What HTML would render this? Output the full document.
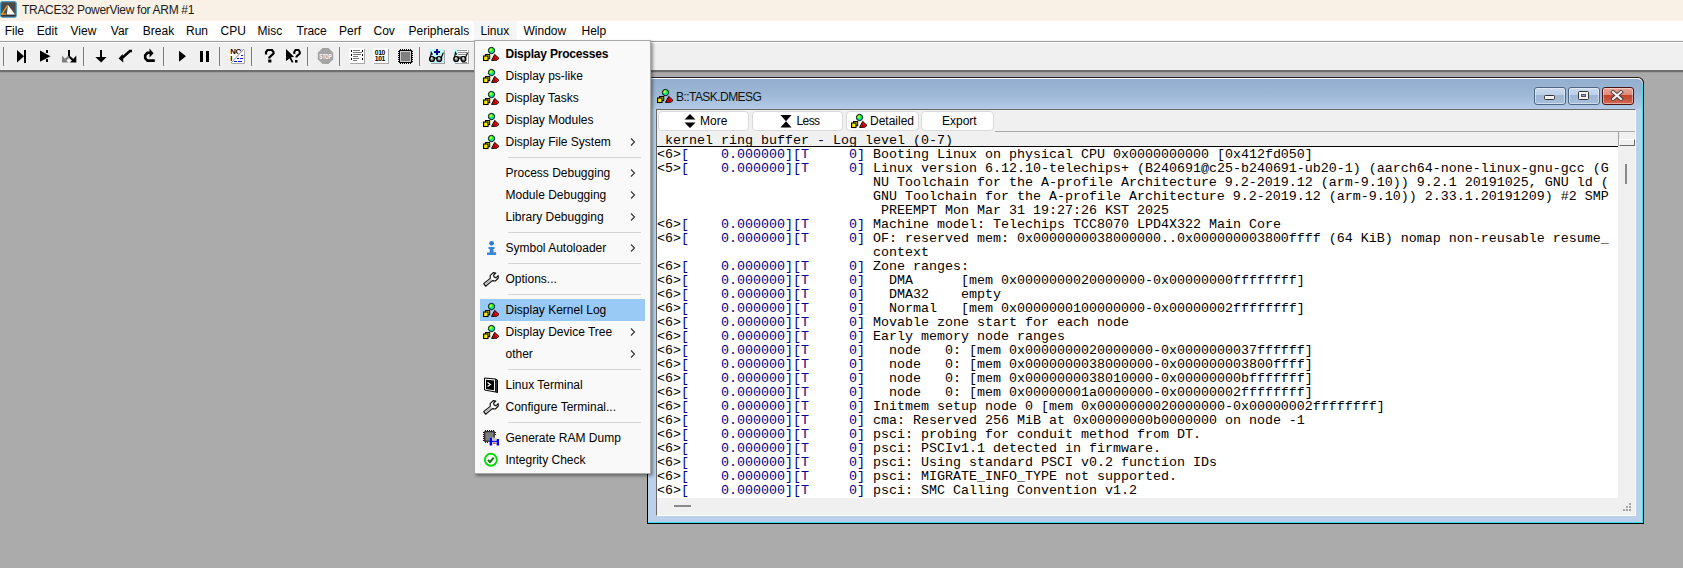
<!DOCTYPE html><html><head><meta charset="utf-8"><style>
*{margin:0;padding:0;box-sizing:border-box}
html,body{width:1683px;height:568px;overflow:hidden;background:#ababab;position:relative;font-family:"Liberation Sans",sans-serif;font-size:12px;color:#000}
.abs{position:absolute}
#title{position:absolute;left:0;top:0;width:1683px;height:21px;background:#f9f1e5}
#title .t{position:absolute;left:22px;top:3px;font-size:12px;line-height:14px;color:#1a1a1a;letter-spacing:-0.3px}
#menubar{position:absolute;left:0;top:21px;width:1683px;height:20px;background:#fff;border-bottom:1px solid #f4f4f4}
.mb{position:absolute;top:24px;line-height:14px;color:#000}
#mbhl{position:absolute;left:474px;top:21px;width:43px;height:19px;background:#f6f6f6}
#tbline{position:absolute;left:0;top:41px;width:1683px;height:1px;background:#a0a0a0}
#toolbar{position:absolute;left:0;top:42px;width:1683px;height:30px;background:#f0f0f0;border-top:1px solid #fff;border-bottom:1px solid #fff}
#tbbot{position:absolute;left:0;top:70px;width:1683px;height:2px;background:#6e6e6e}
#tbbot2{position:absolute;left:0;top:72px;width:1683px;height:1px;background:#9c9c9c}
.tsep{position:absolute;top:47px;width:1px;height:19px;background:#7a7a7a}
/* window */
#win{position:absolute;left:647px;top:77px;width:997px;height:447px;background:#b9d1ea;border-left:1px solid #000;border-top:1px solid #222;border-right:1px solid #000;border-bottom:1px solid #000;border-radius:6px 6px 0 0}
#wincy{position:absolute;right:0;top:6px;width:1px;bottom:0;background:#3de0f0}
#wincy2{position:absolute;left:0;bottom:0;height:1px;right:0;background:#3de0f0}
#wintitle{position:absolute;left:0;top:0;width:994px;height:31px;border-top:1px solid #fff;border-radius:5px 5px 0 0;background:linear-gradient(#93afcf,#9db7d6 50%,#b3cbe5)}
#wtxt{position:absolute;left:28px;top:11px;font-size:12px;line-height:14px;color:#111;letter-spacing:-0.55px}
#client{position:absolute;left:8px;top:31px;width:980px;height:407px;background:#f0f0f0;border-left:1px solid #6a6a6a;border-top:1px solid #6a6a6a;border-right:1px solid #fff;border-bottom:1px solid #fff}
.btn{position:absolute;top:1px;height:20px;background:#fff;border:1px solid #d9d9d9;border-radius:4px;line-height:18px;font-size:12px;color:#000}
#hdrtop{position:absolute;left:338px;top:21px;width:640px;height:1px;background:#a8a8a8}
#hdr{position:absolute;left:0;top:22px;width:961px;height:15px;background:#f0f0f0;border-bottom:1px solid #000;font-family:"Liberation Mono",monospace;font-size:13.3333px;line-height:14px;white-space:pre;overflow:hidden}
#hdr span{position:absolute;left:0;top:2px}
#log{position:absolute;left:0;top:37px;width:961px;height:351px;background:#fff;font-family:"Liberation Mono",monospace;font-size:13.3333px;line-height:14px;white-space:pre;overflow:hidden;padding-top:1px}
#log b{font-weight:normal;color:#00008a}
#vscroll{position:absolute;left:961px;top:22px;width:17px;height:366px;background:#f0f0f0}
#hscroll{position:absolute;left:0;top:388px;width:978px;height:17px;background:#f0f0f0}
.wbtn{position:absolute;top:8px;width:32px;height:18px;border:1px solid #4f6584;border-radius:3px;background:linear-gradient(#c9daee 0%,#bcd0e8 45%,#9fb6d4 46%,#a9c0dc 100%);box-shadow:inset 0 0 0 1px rgba(255,255,255,0.45)}
.wbtn.close{border-color:#4a1414;background:linear-gradient(#e9a496 0%,#de8a78 45%,#c2422a 46%,#cf6b55 100%)}
/* menu */
#menu{position:absolute;left:474px;top:40px;width:177px;height:434px;background:#f9f9f9;border:1px solid #a8a8a8;box-shadow:2px 2px 3px rgba(0,0,0,0.4)}
.mi{position:absolute;left:5px;width:165px;height:22px}
.mi.hl{background:#99c9f5}
.mic{position:absolute;left:3px;top:3px}
.mt{position:absolute;left:25.5px;top:4px;line-height:14px;white-space:nowrap;color:#000}
.bold .mt{font-weight:bold;letter-spacing:-0.2px}
.mar{position:absolute;left:149.5px;top:7px}
.msep{position:absolute;left:33px;width:133px;height:1px;background:#d4d4d4}
</style></head><body>

<svg width="0" height="0" style="position:absolute">
<defs>
<radialGradient id="gball" cx="0.35" cy="0.35" r="0.7"><stop offset="0" stop-color="#e6ff00"/><stop offset="0.5" stop-color="#00ff60"/><stop offset="1" stop-color="#00e0ff"/></radialGradient>
<symbol id="lx" viewBox="0 0 16 16">
 <circle cx="8.5" cy="4.5" r="3.1" fill="url(#gball)" stroke="#000" stroke-width="1"/>
 <rect x="2.5" y="8.5" width="4.2" height="4.2" fill="#ffee00" stroke="#000" stroke-width="1"/>
 <rect x="0.6" y="10" width="4.4" height="4.5" fill="#ffee00" stroke="#000" stroke-width="1.1"/>
 <path d="M11.7 8.4 L8.6 14.4 L13.9 14.2 L16 12.4 Z" fill="#ff0000" stroke="#000" stroke-width="1" stroke-linejoin="round"/><path d="M11.9 9.5 L11.4 12.8 L13.6 12.6" fill="none" stroke="#a00000" stroke-width="0.8"/>
</symbol>
<symbol id="sym" viewBox="0 0 16 16">
 <circle cx="8.6" cy="3.3" r="2.4" fill="#2f7fd6"/>
 <path d="M5.5 7 H11.5 V9 H10.2 V12.5 H12.8 V15 H4 V12.5 H6.7 V9 H5.5Z" fill="#3388dd"/>
 <path d="M10.2 9 V12.5 H12.8 V15" fill="none" stroke="#555" stroke-width="0.6" opacity="0.6"/>
</symbol>
<symbol id="wr" viewBox="0 0 16 16">
 <path d="M0.7 12.6 L2.6 15.2 L9.3 9.6 L12.3 10 L15.3 7 L15.2 4.6 L13 6.6 L11.2 6.1 L10.6 4.2 L12.7 2 L10.2 1.6 L7.2 4.6 L7.2 7.4 Z" fill="#fff" stroke="#111" stroke-width="1.2" stroke-linejoin="round"/>
 <path d="M2.3 13.3 L8.6 8.2" stroke="#888" stroke-width="0.9"/>
</symbol>
<symbol id="term" viewBox="0 0 16 16">
 <path d="M1.5 1 L12.5 2 V15 L1.5 13Z" fill="#fff" stroke="#000" stroke-width="1"/>
 <path d="M12.5 2 L14.5 3 V15.5 L12.5 15" fill="#333" stroke="#000" stroke-width="1"/>
 <path d="M3 2.8 L11 3.6 V13.3 L3 12Z" fill="#000"/>
 <path d="M4.6 5.4 L7.4 7.4 L4.6 9.4" fill="none" stroke="#fff" stroke-width="1.2"/>
</symbol>
<symbol id="ram" viewBox="0 0 16 16">
 <rect x="1.2" y="1.2" width="10.5" height="10.5" fill="#000"/>
 <rect x="2.2" y="2.2" width="8.5" height="8.5" fill="#7d7d7d"/>
 <g fill="#000"><rect x="2" y="0" width="1" height="1.2"/><rect x="4" y="0" width="1" height="1.2"/><rect x="6" y="0" width="1" height="1.2"/><rect x="8" y="0" width="1" height="1.2"/><rect x="10" y="0" width="1" height="1.2"/>
 <rect x="0" y="2" width="1.2" height="1"/><rect x="0" y="4" width="1.2" height="1"/><rect x="0" y="6" width="1.2" height="1"/><rect x="0" y="8" width="1.2" height="1"/><rect x="0" y="10" width="1.2" height="1"/>
 <rect x="11.7" y="2" width="1.2" height="1"/><rect x="11.7" y="4" width="1.2" height="1"/>
 <rect x="2" y="11.7" width="1" height="1.2"/><rect x="4" y="11.7" width="1" height="1.2"/></g>
 <rect x="6.6" y="7.7" width="9.6" height="7.8" fill="#f9f9f9"/>
 <rect x="6.6" y="7.7" width="2.6" height="7.8" fill="#0000f0"/>
 <rect x="13.6" y="9" width="2.6" height="6.5" fill="#0000f0"/>
 <rect x="6.6" y="10.6" width="9.6" height="1.3" fill="#0000f0"/>
 <rect x="9.2" y="8" width="4.4" height="2.6" fill="#c4c4b8"/>
 <rect x="10" y="12.6" width="2.8" height="1.1" fill="#f00000"/>
</symbol>
<symbol id="chk" viewBox="0 0 16 16">
 <circle cx="7.85" cy="7.8" r="6" fill="#fff" stroke="#00dc00" stroke-width="1.9"/>
 <path d="M4.9 7.9 L7 10.1 L10.6 5.7" fill="none" stroke="#007a00" stroke-width="1.9"/>
</symbol>
</defs></svg>

<div id="title"><svg class="abs" style="left:0;top:0.5px" width="17" height="17" viewBox="0 0 17 17"><rect x="0.6" y="0.6" width="15.6" height="15.6" rx="2" fill="#4a4a4a" stroke="#4a9cc0" stroke-width="1.2"/><rect x="1.2" y="14" width="14.4" height="1.4" fill="#333"/><path d="M8 3.9 L15 13.6 H6.8Z" fill="#fff"/><path d="M7.6 4.4 L1.8 13.2 H6" fill="none" stroke="#f5a623" stroke-width="1.2"/></svg><span class="t">TRACE32 PowerView for ARM #1</span></div>
<div id="menubar"></div><div id="mbhl"></div>
<span class="mb" style="left:4.7px">File</span>
<span class="mb" style="left:36.8px">Edit</span>
<span class="mb" style="left:70.5px">View</span>
<span class="mb" style="left:110.8px">Var</span>
<span class="mb" style="left:142.8px">Break</span>
<span class="mb" style="left:186px">Run</span>
<span class="mb" style="left:220.5px">CPU</span>
<span class="mb" style="left:257.5px">Misc</span>
<span class="mb" style="left:296.5px">Trace</span>
<span class="mb" style="left:339px">Perf</span>
<span class="mb" style="left:373.5px">Cov</span>
<span class="mb" style="left:408.5px">Peripherals</span>
<span class="mb" style="left:480.5px">Linux</span>
<span class="mb" style="left:523.5px">Window</span>
<span class="mb" style="left:581.5px">Help</span>
<div id="tbline"></div><div id="toolbar"></div><div id="tbbot"></div><div id="tbbot2"></div>
<div class="tsep" style="left:3px"></div>
<div class="tsep" style="left:83px"></div>
<div class="tsep" style="left:163px"></div>
<div class="tsep" style="left:219px"></div>
<div class="tsep" style="left:251px"></div>
<div class="tsep" style="left:307px"></div>
<div class="tsep" style="left:339px"></div>
<div class="tsep" style="left:419px"></div>
<svg class="abs" style="left:0;top:0" width="480" height="72" viewBox="0 0 480 72" shape-rendering="crispEdges">
<g fill="#000">
 <!-- 1 step into -->
 <polygon points="17,50 24,56.25 17,62.5" shape-rendering="geometricPrecision"/>
 <rect x="24" y="50" width="2" height="12.5"/>
 <!-- 2 step dotted -->
 <polygon points="40,50.5 50.5,56.25 40,61.7" shape-rendering="geometricPrecision"/>
 <rect x="46" y="50" width="2.2" height="3" />
 <rect x="46" y="59" width="2.2" height="3.4" />
 <!-- 3 split -->
 <rect x="68" y="50" width="2.2" height="7"/>
 <path d="M69 56.5 L74 61" stroke="#000" stroke-width="2.2" fill="none" shape-rendering="geometricPrecision"/>
 <polygon points="76.3,55.5 76.3,62.5 70,62.5" shape-rendering="geometricPrecision"/>
 <path d="M69 56.5 L64 61" stroke="#808080" stroke-width="2.2" fill="none" shape-rendering="geometricPrecision"/>
 <polygon points="62,55.5 62,62.5 68.3,62.5" fill="#808080" shape-rendering="geometricPrecision"/>
 <!-- 4 down arrow -->
 <rect x="100" y="50" width="2.3" height="7.5"/>
 <polygon points="95.4,57 106.6,57 101.1,62.6" shape-rendering="geometricPrecision"/>
 <!-- 5 return -->
 <path d="M132 51 H129.8 L121.5 58.6" stroke="#000" stroke-width="2.6" fill="none" shape-rendering="geometricPrecision"/>
 <polygon points="118.5,58.5 122.7,54 123.4,62.6" shape-rendering="geometricPrecision"/>
 <!-- 6 redo -->
 <path d="M154.8 60.6 H147.5 L145.2 58.3 V55.2 L147.5 52.8 H150.5" stroke="#000" stroke-width="2.6" fill="none" shape-rendering="geometricPrecision"/>
 <polygon points="149.5,48.5 153.6,53.2 149.5,57.6" shape-rendering="geometricPrecision"/>
 <!-- 7 play -->
 <polygon points="179,50.8 186,56.25 179,61.7" shape-rendering="geometricPrecision"/>
 <!-- 8 pause -->
 <rect x="200" y="51" width="3.2" height="10.5"/>
 <rect x="206" y="51" width="3.2" height="10.5"/>
</g>
 <!-- 9 NOP -->
 <rect x="231" y="50" width="14" height="14" fill="#a8a8a8"/>
 <rect x="230" y="49" width="14" height="14" fill="#fff"/>
 <clipPath id="nopclip"><polygon points="230,49 244,49 230,63"/></clipPath><text clip-path="url(#nopclip)" x="230.2" y="54.2" font-family="Liberation Sans" font-weight="bold" font-size="7.8" fill="#000" letter-spacing="-0.3">NOP</text>
 <text clip-path="url(#nopclip)" x="230.2" y="60.8" font-family="Liberation Sans" font-weight="bold" font-size="7.8" fill="#000">L</text>
 <path d="M231 63 L243.5 49.5" stroke="#fff" stroke-width="2.2" shape-rendering="geometricPrecision"/>
 <path d="M231 63 L243.5 49.5" stroke="#555" stroke-width="0.7" shape-rendering="geometricPrecision"/>
 <rect x="236" y="53.5" width="2" height="0.0" fill="#00f"/>
 <rect x="240.5" y="55" width="2.4" height="1.2" fill="#0a14f0"/>
 <rect x="236.5" y="58" width="2.4" height="1.2" fill="#0a14f0"/>
 <rect x="240" y="58" width="2.8" height="1.2" fill="#0a14f0"/>
 <rect x="233.5" y="61" width="3" height="1.2" fill="#0a14f0"/>
 <rect x="238" y="61" width="3.5" height="1.2" fill="#0a14f0"/>
 <!-- 10 ? -->
 <g shape-rendering="geometricPrecision">
 <path d="M266 54.5 V52 L267.5 50 H272 L273.5 52 V53.5 L269.3 57.5 V58.5" fill="none" stroke="#000" stroke-width="2.2"/>
 <rect x="268.2" y="59.5" width="3.2" height="3" fill="#000"/>
 <!-- 11 cursor ? -->
 <polygon points="286,49 294,56.8 291,57.5 293.5,62 292,62.8 289.5,58.5 286,61" fill="#000"/>
 <path d="M294.3 54 V52 L295.5 50 H298.5 L299.8 52 V53.5 L296.5 56.5 V57.5" fill="none" stroke="#000" stroke-width="2"/>
 <rect x="295" y="60" width="2.5" height="2.6" fill="#000"/>
 <!-- 12 STOP -->
 <polygon points="322.5,48 328.5,48 333.2,52.7 333.2,59.3 328.5,64 322.5,64 317.8,59.3 317.8,52.7" fill="#a4a4a4"/>
 <text x="319.3" y="59" font-family="Liberation Sans" font-weight="bold" font-size="6.5" fill="#fff" textLength="12.5" lengthAdjust="spacingAndGlyphs">STOP</text>
 </g>
 <!-- 13 list -->
 <rect x="350" y="49" width="15" height="15" fill="#a8a8a8"/>
 <rect x="349.2" y="48.2" width="14.8" height="14.8" fill="#fff"/>
 <g fill="#000"><rect x="350.8" y="50.2" width="1.3" height="1.8"/><rect x="350.8" y="54.2" width="1.3" height="1.8"/><rect x="350.8" y="58.2" width="1.3" height="1.8"/>
 <rect x="362" y="50.2" width="1.3" height="1.8"/><rect x="362" y="54.2" width="1.3" height="1.8"/><rect x="362" y="58.2" width="1.3" height="1.8"/></g>
 <g fill="#7a7a7a"><rect x="353.3" y="50" width="6.5" height="0.9"/><rect x="353.3" y="52" width="8.3" height="0.9"/><rect x="353.3" y="54.1" width="7.5" height="0.9"/><rect x="353.3" y="56" width="4.8" height="0.9"/><rect x="353.3" y="58" width="5.6" height="0.9"/><rect x="353.3" y="60.1" width="3.7" height="0.9"/></g>
 <!-- 14 010 101 -->
 <rect x="374" y="49" width="15" height="15" fill="#a8a8a8"/>
 <rect x="373.3" y="48.2" width="14.8" height="14.8" fill="#fff"/>
 <text x="374.8" y="55.2" font-family="Liberation Sans" font-weight="bold" font-size="6.8" fill="#000" letter-spacing="-0.4">010</text>
 <text x="374.8" y="61.3" font-family="Liberation Sans" font-weight="bold" font-size="6.8" fill="#000" letter-spacing="-0.4">101</text>
 <!-- 15 chip -->
 <rect x="399" y="50" width="13" height="13" fill="#000"/>
 <rect x="400" y="51" width="11" height="11" fill="#cacaca"/>
 <rect x="401" y="52" width="9" height="9" fill="#808080"/>
 <g fill="#000">
 <rect x="400" y="49" width="1" height="1"/><rect x="402" y="49" width="1" height="1"/><rect x="404" y="49" width="1" height="1"/><rect x="406" y="49" width="1" height="1"/><rect x="408" y="49" width="1" height="1"/><rect x="410" y="49" width="1" height="1"/>
 <rect x="400" y="63" width="1" height="1"/><rect x="402" y="63" width="1" height="1"/><rect x="404" y="63" width="1" height="1"/><rect x="406" y="63" width="1" height="1"/><rect x="408" y="63" width="1" height="1"/><rect x="410" y="63" width="1" height="1"/>
 <rect x="398" y="51" width="1" height="1"/><rect x="398" y="53" width="1" height="1"/><rect x="398" y="55" width="1" height="1"/><rect x="398" y="57" width="1" height="1"/><rect x="398" y="59" width="1" height="1"/><rect x="398" y="61" width="1" height="1"/>
 <rect x="412" y="51" width="1" height="1"/><rect x="412" y="53" width="1" height="1"/><rect x="412" y="55" width="1" height="1"/><rect x="412" y="57" width="1" height="1"/><rect x="412" y="59" width="1" height="1"/><rect x="412" y="61" width="1" height="1"/>
 </g>
 <!-- 16 glasses + -->
 <rect x="431" y="50" width="14" height="14" fill="#a0a0a0"/>
 <rect x="430" y="49" width="14" height="14" fill="#bff9f9"/>
 <rect x="436" y="49" width="2" height="6" fill="#000088"/>
 <rect x="434" y="51" width="6" height="2" fill="#000088"/>
 <g shape-rendering="geometricPrecision">
 <circle cx="432" cy="59" r="2.4" fill="#9a9a9a" stroke="#000" stroke-width="1.4"/>
 <circle cx="439.2" cy="59" r="2.4" fill="#9a9a9a" stroke="#000" stroke-width="1.4"/>
 <rect x="431" y="57.3" width="1.5" height="1.3" fill="#fff"/><rect x="438.2" y="57.3" width="1.5" height="1.3" fill="#fff"/>
 <path d="M434 58 H437" stroke="#000" stroke-width="1.3"/>
 <path d="M430.3 57.5 L431.3 52.6 L432.4 54.6 M441.5 57.2 L443.3 52.6" stroke="#000" stroke-width="1.2" fill="none"/>
 </g>
 <!-- 17 glasses 2 -->
 <rect x="455" y="50" width="14" height="14" fill="#a0a0a0"/>
 <rect x="454" y="49" width="14" height="14" fill="#fff"/>
 <rect x="454" y="49" width="4" height="14" fill="#bff9f9"/>
 <g fill="#8a8a8a"><rect x="457" y="50" width="10" height="1"/><rect x="458" y="52" width="9" height="1"/><rect x="458" y="54" width="8" height="1"/><rect x="458" y="56" width="7" height="1"/><rect x="462" y="61.5" width="5" height="1"/></g>
 <g shape-rendering="geometricPrecision">
 <circle cx="456.2" cy="59" r="2.4" fill="#9a9a9a" stroke="#000" stroke-width="1.4"/>
 <circle cx="463.4" cy="59" r="2.4" fill="#9a9a9a" stroke="#000" stroke-width="1.4"/>
 <rect x="455.2" y="57.3" width="1.5" height="1.3" fill="#fff"/><rect x="462.4" y="57.3" width="1.5" height="1.3" fill="#fff"/>
 <path d="M458.2 58 H461.2" stroke="#000" stroke-width="1.3"/>
 <path d="M454.5 57.5 L455.5 52.6 L456.6 54.6 M465.7 57.2 L467.5 52.6" stroke="#000" stroke-width="1.2" fill="none"/>
 </g>
</svg>

<div id="win"><div id="wintitle"><svg class="abs" style="left:9px;top:9px" width="16" height="16"><use href="#lx"/></svg><span id="wtxt">B::TASK.DMESG</span>
<div class="wbtn" style="left:886px"><div class="abs" style="left:9px;top:7px;width:11px;height:5px;background:#f2f2f2;border:1px solid #333;border-radius:1.5px"></div></div>
<div class="wbtn" style="left:920px"><div class="abs" style="left:9px;top:3px;width:11px;height:9px;background:#f2f2f2;border:1px solid #333;border-radius:1.5px"><div class="abs" style="left:2px;top:2px;width:5px;height:3px;background:#8aa6c8;border:1px solid #555"></div></div></div>
<div class="wbtn close" style="left:954px"><svg class="abs" style="left:7px;top:2px" width="14" height="11" viewBox="0 0 14 11"><path d="M3 2 L11 9 M11 2 L3 9" stroke="#3a3a3a" stroke-width="3.8" stroke-linecap="square"/><path d="M3 2 L11 9 M11 2 L3 9" stroke="#f4f4f4" stroke-width="2.2" stroke-linecap="square"/></svg></div>
</div><div id="wincy"></div><div id="wincy2"></div>
<div id="client">
<div class="btn" style="left:1px;width:91px"><svg class="abs" style="left:25px;top:2px" width="12" height="15" viewBox="0 0 12 15"><path d="M6 0 L11.5 5.5 H0.5Z M0.5 8.5 H11.5 L6 14Z" fill="#000"/></svg><span class="abs" style="left:41px;top:0">More</span></div>
<div class="btn" style="left:95px;width:91px"><svg class="abs" style="left:27px;top:3px" width="12" height="15" viewBox="0 0 12 15"><path d="M0.5 0 H11.5 L6 6.2 Z M6 6.2 L11.5 12.5 H0.5Z" fill="#000"/></svg><span class="abs" style="left:43.5px;top:0;letter-spacing:-0.6px">Less</span></div>
<div class="btn" style="left:189px;width:73px"><svg class="abs" style="left:4px;top:1px" width="16" height="16"><use href="#lx"/></svg><span class="abs" style="left:23px;top:0">Detailed</span></div>
<div class="btn" style="left:264px;width:73px"><span class="abs" style="left:20px;top:0">Export</span></div>
<div id="hdrtop"></div>
<div id="hdr"><span> kernel ring buffer - Log level (0-7)</span></div>
<div id="log">&lt;6&gt;<b>[    0.000000][T     0]</b> Booting Linux on physical CPU 0x0000000000 [0x412fd050]
&lt;5&gt;<b>[    0.000000][T     0]</b> Linux version 6.12.10-telechips+ (B240691@c25-b240691-ub20-1) (aarch64-none-linux-gnu-gcc (G
                           NU Toolchain for the A-profile Architecture 9.2-2019.12 (arm-9.10)) 9.2.1 20191025, GNU ld (
                           GNU Toolchain for the A-profile Architecture 9.2-2019.12 (arm-9.10)) 2.33.1.20191209) #2 SMP
                            PREEMPT Mon Mar 31 19:27:26 KST 2025
&lt;6&gt;<b>[    0.000000][T     0]</b> Machine model: Telechips TCC8070 LPD4X322 Main Core
&lt;6&gt;<b>[    0.000000][T     0]</b> OF: reserved mem: 0x0000000038000000..0x000000003800ffff (64 KiB) nomap non-reusable resume_
                           context
&lt;6&gt;<b>[    0.000000][T     0]</b> Zone ranges:
&lt;6&gt;<b>[    0.000000][T     0]</b>   DMA      [mem 0x0000000020000000-0x00000000ffffffff]
&lt;6&gt;<b>[    0.000000][T     0]</b>   DMA32    empty
&lt;6&gt;<b>[    0.000000][T     0]</b>   Normal   [mem 0x0000000100000000-0x00000002ffffffff]
&lt;6&gt;<b>[    0.000000][T     0]</b> Movable zone start for each node
&lt;6&gt;<b>[    0.000000][T     0]</b> Early memory node ranges
&lt;6&gt;<b>[    0.000000][T     0]</b>   node   0: [mem 0x0000000020000000-0x0000000037ffffff]
&lt;6&gt;<b>[    0.000000][T     0]</b>   node   0: [mem 0x0000000038000000-0x000000003800ffff]
&lt;6&gt;<b>[    0.000000][T     0]</b>   node   0: [mem 0x0000000038010000-0x00000000bfffffff]
&lt;6&gt;<b>[    0.000000][T     0]</b>   node   0: [mem 0x00000001a0000000-0x00000002ffffffff]
&lt;6&gt;<b>[    0.000000][T     0]</b> Initmem setup node 0 [mem 0x0000000020000000-0x00000002ffffffff]
&lt;6&gt;<b>[    0.000000][T     0]</b> cma: Reserved 256 MiB at 0x00000000b0000000 on node -1
&lt;6&gt;<b>[    0.000000][T     0]</b> psci: probing for conduit method from DT.
&lt;6&gt;<b>[    0.000000][T     0]</b> psci: PSCIv1.1 detected in firmware.
&lt;6&gt;<b>[    0.000000][T     0]</b> psci: Using standard PSCI v0.2 function IDs
&lt;6&gt;<b>[    0.000000][T     0]</b> psci: MIGRATE_INFO_TYPE not supported.
&lt;6&gt;<b>[    0.000000][T     0]</b> psci: SMC Calling Convention v1.2</div>
<div id="vscroll"><div class="abs" style="left:0;top:0;width:1px;height:14px;background:#a0a0a0"></div><div class="abs" style="left:1px;top:7px;width:16px;height:7px;border-top:1px solid #fff;border-left:1px solid #fff;border-bottom:1px solid #6a6a6a;border-right:1px solid #6a6a6a;background:#f0f0f0"></div><div class="abs" style="left:7px;top:32px;width:2px;height:20px;background:#8a8a8a"></div></div>
<div id="hscroll"><div class="abs" style="left:17px;top:7px;width:17px;height:2px;background:#8a8a8a"></div>
<svg class="abs" style="left:964px;top:3px" width="12" height="12"><g fill="#a4a4a4"><rect x="8" y="2" width="2" height="2"/><rect x="5" y="5" width="2" height="2"/><rect x="8" y="5" width="2" height="2"/><rect x="2" y="8" width="2" height="2"/><rect x="5" y="8" width="2" height="2"/><rect x="8" y="8" width="2" height="2"/></g></svg></div>
</div></div>
<div id="menu"><div class="mi bold" style="top:2px"><svg class="mic" width="16" height="16" viewBox="0 0 16 16"><use href="#lx"/></svg><span class="mt">Display Processes</span></div>
<div class="mi" style="top:24px"><svg class="mic" width="16" height="16" viewBox="0 0 16 16"><use href="#lx"/></svg><span class="mt">Display ps-like</span></div>
<div class="mi" style="top:46px"><svg class="mic" width="16" height="16" viewBox="0 0 16 16"><use href="#lx"/></svg><span class="mt">Display Tasks</span></div>
<div class="mi" style="top:68px"><svg class="mic" width="16" height="16" viewBox="0 0 16 16"><use href="#lx"/></svg><span class="mt">Display Modules</span></div>
<div class="mi" style="top:90px"><svg class="mic" width="16" height="16" viewBox="0 0 16 16"><use href="#lx"/></svg><span class="mt">Display File System</span><svg class="mar" width="6" height="8" viewBox="0 0 6 8"><path d="M1 0.5 L4.5 4 L1 7.5" fill="none" stroke="#333" stroke-width="1.1"/></svg></div>
<div class="msep" style="top:116px"></div>
<div class="mi" style="top:121px"><span class="mt">Process Debugging</span><svg class="mar" width="6" height="8" viewBox="0 0 6 8"><path d="M1 0.5 L4.5 4 L1 7.5" fill="none" stroke="#333" stroke-width="1.1"/></svg></div>
<div class="mi" style="top:143px"><span class="mt">Module Debugging</span><svg class="mar" width="6" height="8" viewBox="0 0 6 8"><path d="M1 0.5 L4.5 4 L1 7.5" fill="none" stroke="#333" stroke-width="1.1"/></svg></div>
<div class="mi" style="top:165px"><span class="mt">Library Debugging</span><svg class="mar" width="6" height="8" viewBox="0 0 6 8"><path d="M1 0.5 L4.5 4 L1 7.5" fill="none" stroke="#333" stroke-width="1.1"/></svg></div>
<div class="msep" style="top:191px"></div>
<div class="mi" style="top:196px"><svg class="mic" width="16" height="16" viewBox="0 0 16 16"><use href="#sym"/></svg><span class="mt">Symbol Autoloader</span><svg class="mar" width="6" height="8" viewBox="0 0 6 8"><path d="M1 0.5 L4.5 4 L1 7.5" fill="none" stroke="#333" stroke-width="1.1"/></svg></div>
<div class="msep" style="top:222px"></div>
<div class="mi" style="top:227px"><svg class="mic" width="16" height="16" viewBox="0 0 16 16"><use href="#wr"/></svg><span class="mt">Options...</span></div>
<div class="msep" style="top:253px"></div>
<div class="mi hl" style="top:258px"><svg class="mic" width="16" height="16" viewBox="0 0 16 16"><use href="#lx"/></svg><span class="mt">Display Kernel Log</span></div>
<div class="mi" style="top:280px"><svg class="mic" width="16" height="16" viewBox="0 0 16 16"><use href="#lx"/></svg><span class="mt">Display Device Tree</span><svg class="mar" width="6" height="8" viewBox="0 0 6 8"><path d="M1 0.5 L4.5 4 L1 7.5" fill="none" stroke="#333" stroke-width="1.1"/></svg></div>
<div class="mi" style="top:302px"><span class="mt">other</span><svg class="mar" width="6" height="8" viewBox="0 0 6 8"><path d="M1 0.5 L4.5 4 L1 7.5" fill="none" stroke="#333" stroke-width="1.1"/></svg></div>
<div class="msep" style="top:328px"></div>
<div class="mi" style="top:333px"><svg class="mic" width="16" height="16" viewBox="0 0 16 16"><use href="#term"/></svg><span class="mt">Linux Terminal</span></div>
<div class="mi" style="top:355px"><svg class="mic" width="16" height="16" viewBox="0 0 16 16"><use href="#wr"/></svg><span class="mt">Configure Terminal...</span></div>
<div class="msep" style="top:381px"></div>
<div class="mi" style="top:386px"><svg class="mic" width="16" height="16" viewBox="0 0 16 16"><use href="#ram"/></svg><span class="mt">Generate RAM Dump</span></div>
<div class="mi" style="top:408px"><svg class="mic" width="16" height="16" viewBox="0 0 16 16"><use href="#chk"/></svg><span class="mt">Integrity Check</span></div></div>
</body></html>
